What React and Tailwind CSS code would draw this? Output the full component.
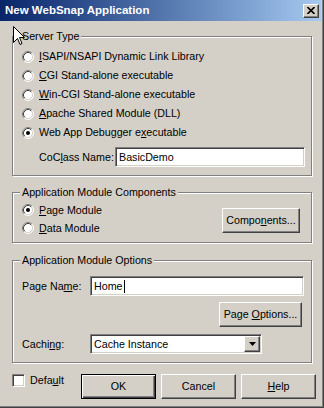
import React from "react";

const RAISED =
  "bg-[#d4d0c8] border border-t-white border-l-white border-r-[#404040] border-b-[#404040] shadow-[inset_-1px_-1px_0_#808080]";
const SUNKEN =
  "bg-white border border-t-[#808080] border-l-[#808080] border-r-white border-b-white shadow-[inset_1px_1px_0_#404040,inset_-1px_-1px_0_#d4d0c8]";

function Radio({ checked }) {
  return (
    <svg width="12" height="12" viewBox="0 0 12 12" className="shrink-0">
      <circle cx="6" cy="6" r="5" fill="#fff" />
      <path d="M2.11 9.89 A5.5 5.5 0 0 1 9.89 2.11" stroke="#808080" fill="none" />
      <path d="M9.89 2.11 A5.5 5.5 0 0 1 2.11 9.89" stroke="#fff" fill="none" />
      <path d="M2.82 9.18 A4.5 4.5 0 0 1 9.18 2.82" stroke="#404040" fill="none" />
      <path d="M9.18 2.82 A4.5 4.5 0 0 1 2.82 9.18" stroke="#d4d0c8" fill="none" />
      {checked && <circle cx="6" cy="6" r="2" fill="#000" />}
    </svg>
  );
}

function RadioRow({ checked, children, h = "h-[19px]" }) {
  return (
    <div className={`flex items-center gap-[5px] ${h}`}>
      <Radio checked={checked} />
      <span className="leading-[13px] whitespace-nowrap">{children}</span>
    </div>
  );
}

function Group({ title, className = "", children }) {
  return (
    <div
      className={`relative border border-[#808080] shadow-[inset_1px_1px_0_#fff,1px_1px_0_#fff] ${className}`}
    >
      <span className="absolute left-[7px] -top-[7px] px-[2px] bg-[#d4d0c8] leading-[13px] whitespace-nowrap">
        {title}
      </span>
      {children}
    </div>
  );
}

function Button({ children, className = "" }) {
  return (
    <div className={`${RAISED} flex items-center justify-center h-[25px] whitespace-nowrap ${className}`}>
      {children}
    </div>
  );
}

function Cursor() {
  return (
    <svg
      width="12"
      height="20"
      viewBox="0 0 12 20"
      className="absolute left-[13px] top-[26px]"
    >
      <path
        d="M0.5 0.5 L0.5 16.5 L4.5 12.5 L7 18.5 L9 17.5 L6.5 11.5 L11.5 11.5 Z"
        fill="#fff"
        stroke="#000"
        strokeLinejoin="miter"
      />
    </svg>
  );
}

export default function App() {
  return (
    <div className="relative w-[324px] h-[408px] bg-[#d4d0c8] overflow-hidden font-['Liberation_Sans',Arial,sans-serif] text-[10.7px] leading-[13px] text-black shadow-[inset_-1px_-1px_0_#404040,inset_-2px_-2px_0_#808080]">
      {/* Title bar */}
      <div className="mr-[3px] h-[21px] flex items-center justify-between bg-gradient-to-r from-[#0a246a] to-[#a6caf0]">
        <span className="pl-[5px] text-white font-bold text-[11.5px]">New WebSnap Application</span>
        <div className={`${RAISED} w-[16px] h-[14px] mr-[2px] flex items-center justify-center`}>
          <svg width="8" height="7" viewBox="0 0 8 7">
            <path d="M0.5 0 L7.5 7 M7.5 0 L0.5 7" stroke="#000" strokeWidth="1.6" />
          </svg>
        </div>
      </div>

      <div className="px-[12px]">
        {/* Server Type */}
        <Group title="Server Type" className="mt-[15px] pl-[9px] pt-[10px] pb-[8px]">
          <RadioRow>
            <u>I</u>SAPI/NSAPI Dynamic Link Library
          </RadioRow>
          <RadioRow>
            <u>C</u>GI Stand-alone executable
          </RadioRow>
          <RadioRow>
            <u>W</u>in-CGI Stand-alone executable
          </RadioRow>
          <RadioRow>
            <u>A</u>pache Shared Module (DLL)
          </RadioRow>
          <RadioRow checked>
            Web App Debugger e<u>x</u>ecutable
          </RadioRow>
          <div className="flex items-center mt-[5px] pl-[17px]">
            <span className="w-[76px] shrink-0 whitespace-nowrap">
              CoC<u>l</u>ass Name:
            </span>
            <div className={`${SUNKEN} w-[190px] h-[20px] shrink-0 flex items-center pl-[3px]`}>
              BasicDemo
            </div>
          </div>
        </Group>

        {/* Application Module Components */}
        <Group
          title="Application Module Components"
          className="mt-[16px] pl-[9px] pr-[11px] pt-[8px] pb-[5px] flex items-start justify-between"
        >
          <div>
            <RadioRow checked h="h-[18px]">
              <u>P</u>age Module
            </RadioRow>
            <RadioRow h="h-[18px]">
              <u>D</u>ata Module
            </RadioRow>
          </div>
          <Button className="w-[78px] mt-[7px]">
            <span>
              Compo<u>n</u>ents...
            </span>
          </Button>
        </Group>

        {/* Application Module Options */}
        <Group
          title="Application Module Options"
          className="mt-[17px] pl-[9px] pr-[9px] pt-[15px] pb-[8px] flex flex-col"
        >
          <div className="flex items-center">
            <span className="w-[68px] shrink-0 whitespace-nowrap">
              Page Na<u>m</u>e:
            </span>
            <div className={`${SUNKEN} w-[214px] h-[20px] shrink-0 flex items-center pl-[3px]`}>
              Home
              <span className="w-[1px] h-[13px] bg-black ml-[1px]" />
            </div>
          </div>
          <Button className="w-[83px] mt-[6px] self-end">
            <span>
              Page <u>O</u>ptions...
            </span>
          </Button>
          <div className="flex items-center mt-[7px]">
            <span className="w-[68px] shrink-0 whitespace-nowrap">
              Cachi<u>n</u>g:
            </span>
            <div className={`${SUNKEN} w-[172px] h-[20px] shrink-0 flex items-center justify-between pl-[3px] pr-[1px]`}>
              <span>Cache Instance</span>
              <div className={`${RAISED} w-[16px] h-[16px] flex items-center justify-center`}>
                <svg width="7" height="4" viewBox="0 0 7 4">
                  <path d="M0 0 H7 L3.5 4 Z" fill="#000" />
                </svg>
              </div>
            </div>
          </div>
        </Group>

        {/* Bottom row */}
        <div className="flex items-start mt-[11px]">
          <div className="w-[69px] shrink-0 flex items-center gap-[5px] h-[13px]">
            <div className={`${SUNKEN} w-[13px] h-[13px] shrink-0`} />
            <span className="whitespace-nowrap">
              Defa<u>u</u>lt
            </span>
          </div>
          <div className="flex gap-[5px]">
            <div className="w-[75px] h-[25px] bg-[#d4d0c8] border border-black shadow-[inset_1px_1px_0_#fff,inset_-1px_-1px_0_#404040,inset_-2px_-2px_0_#808080] flex items-center justify-center">
              OK
            </div>
            <Button className="w-[75px]">Cancel</Button>
            <Button className="w-[75px]">
              <span>
                <u>H</u>elp
              </span>
            </Button>
          </div>
        </div>
      </div>

      <Cursor />
    </div>
  );
}
